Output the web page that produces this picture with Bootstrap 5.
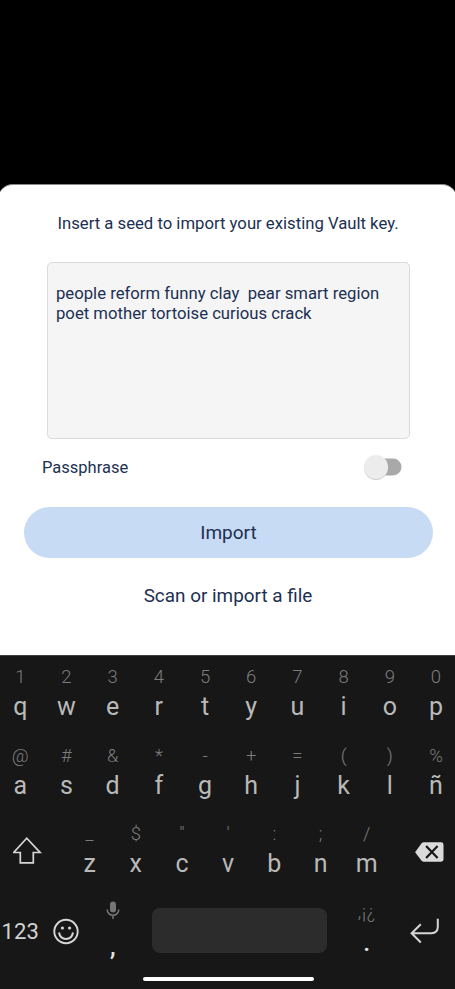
<!DOCTYPE html>
<html lang="en">
<head>
<meta charset="utf-8">
<meta name="viewport" content="width=device-width, initial-scale=1">
<title>Import Vault key</title>
<link href="https://cdn.jsdelivr.net/npm/bootstrap@5.3.0/dist/css/bootstrap.min.css" rel="stylesheet">
<style>
  body { font-family: Roboto, "Noto Sans", sans-serif; background: #000; color: #1c3052; }
  .phone { width: 455px; height: 989px; }
  .backdrop-area { height: 184px; }
  .sheet { height: 471px; margin: 0 -2px; padding: 0 2px; border-radius: 15px 15px 0 0; border-top: 1px solid #8a8a8a; }
  .prompt { font-size: 16.7px; line-height: 24px; margin-top: 27px; padding-left: 1px; }
  .seed { width: 363px; height: 177px; margin: 26px 0 0 47px; padding: 21px 8px; font-size: 16.7px; line-height: 20px;
    color: #1c3052; background: #f5f5f5; border: 1px solid #dadada; border-radius: 5px; resize: none; }
  .pass-row { height: 28px; margin-top: 14px; padding: 0 53.5px 0 42px; font-size: 16.5px; }
  .pass-label { padding-top: 2px; }
  .toggle { width: 38px; height: 26px; }
  .btn-import { width: 409px; height: 51px; margin: 25.5px 0 0 24px; padding: 8px 0 6px; font-size: 19px; color: #1c3052; background: #c8dbf4; border: 0; }
  .btn-scan { margin-top: 23px; padding: 0 0 0 1px; font-size: 18.9px; line-height: 30px; color: #1c3052; border: 0; }
  .keyboard { height: 334px; background: #171717; border-top: 1px solid #3c4040; }
  .keys { width: 462px; height: 78.7px; margin-left: -2.8px; }
  .key { width: 46.2px; padding-top: 8px; color: #b9b9b9; }
  .key-wide { width: 69.3px; }
  .key-space { width: 207.9px; }
  .alt { height: 26px; font-size: 18.5px; line-height: 26px; color: #7c7c7c; font-weight: 300; }
  .main { height: 31px; font-size: 25px; line-height: 33px; }
  .bright { color: #e4e4e4; font-weight: 500; }
  .comma { padding-top: 4px; }
  .marks { font-size: 18px; line-height: 23px; letter-spacing: .8px; }
  .num { font-size: 22px; line-height: 30px; letter-spacing: .2px; color: #d2d2d2; margin-top: 17px; white-space: nowrap; }
  .space-bar { width: 175px; height: 45px; margin-top: 8px; border-radius: 8px; background: #2c2c2c; }
  .home-bar { width: 171px; height: 4px; margin: 6.5px 0 0 142.5px; border-radius: 2px; background: #fff; }
  svg { display: block; flex: none; }
</style>
</head>
<body>
<main class="phone overflow-hidden d-flex flex-column">
  <div class="backdrop-area flex-shrink-0"></div>
  <section class="sheet bg-white flex-shrink-0">
    <p class="prompt text-center mb-0">Insert a seed to import your existing Vault key.</p>
    <textarea class="seed d-block overflow-hidden" spellcheck="false" aria-label="Seed">people reform funny clay  pear smart region poet mother tortoise curious crack</textarea>
    <div class="pass-row d-flex align-items-center justify-content-between">
      <span class="pass-label">Passphrase</span>
      <svg class="toggle" viewBox="0.5 0 38 26" role="switch" aria-checked="false">
        <rect x="8" y="4.5" width="30" height="17" rx="8.5" fill="#a9a9a9"/>
        <circle cx="12.5" cy="14" r="12" fill="#cfcfcf"/>
        <circle cx="12.5" cy="13" r="12" fill="#ececec"/>
      </svg>
    </div>
    <button class="btn btn-import rounded-pill d-block" type="button">Import</button>
    <button class="btn btn-scan w-100 d-block" type="button">Scan or import a file</button>
  </section>

  <section class="keyboard flex-shrink-0 overflow-hidden">
    <div class="keys d-flex text-center">
      <div class="key"><div class="alt">1</div><div class="main">q</div></div>
      <div class="key"><div class="alt">2</div><div class="main">w</div></div>
      <div class="key"><div class="alt">3</div><div class="main">e</div></div>
      <div class="key"><div class="alt">4</div><div class="main">r</div></div>
      <div class="key"><div class="alt">5</div><div class="main">t</div></div>
      <div class="key"><div class="alt">6</div><div class="main">y</div></div>
      <div class="key"><div class="alt">7</div><div class="main">u</div></div>
      <div class="key"><div class="alt">8</div><div class="main">i</div></div>
      <div class="key"><div class="alt">9</div><div class="main">o</div></div>
      <div class="key"><div class="alt">0</div><div class="main">p</div></div>
    </div>
    <div class="keys d-flex text-center">
      <div class="key"><div class="alt">@</div><div class="main">a</div></div>
      <div class="key"><div class="alt">#</div><div class="main">s</div></div>
      <div class="key"><div class="alt">&amp;</div><div class="main">d</div></div>
      <div class="key"><div class="alt">*</div><div class="main">f</div></div>
      <div class="key"><div class="alt">-</div><div class="main">g</div></div>
      <div class="key"><div class="alt">+</div><div class="main">h</div></div>
      <div class="key"><div class="alt">=</div><div class="main">j</div></div>
      <div class="key"><div class="alt">(</div><div class="main">k</div></div>
      <div class="key"><div class="alt">)</div><div class="main">l</div></div>
      <div class="key"><div class="alt">%</div><div class="main">ñ</div></div>
    </div>
    <div class="keys d-flex text-center">
      <div class="key key-wide">
        <svg class="ms-3" width="30" height="50" viewBox="0.3 0 30 50" fill="none" stroke="#d6d6d6" stroke-width="1.7"><path d="M14 17.200 1 31.500h6.600v10.300h13V31.500h6.800z"/></svg>
      </div>
      <div class="key"><div class="alt">_</div><div class="main">z</div></div>
      <div class="key"><div class="alt">$</div><div class="main">x</div></div>
      <div class="key"><div class="alt">"</div><div class="main">c</div></div>
      <div class="key"><div class="alt">'</div><div class="main">v</div></div>
      <div class="key"><div class="alt">:</div><div class="main">b</div></div>
      <div class="key"><div class="alt">;</div><div class="main">n</div></div>
      <div class="key"><div class="alt">/</div><div class="main">m</div></div>
      <div class="key key-wide d-flex justify-content-end">
        <svg class="me-3" width="29" height="50" viewBox="-1.1 0 29 50" overflow="visible"><path d="M0 31.200 6.300 22.500q1-1.200 2.600-1.200H26q2.400 0 2.400 2.400v14.600q0 2.400-2.400 2.400H8.900q-1.600 0-2.600-1.200z" fill="#dadada"/><path d="m11 25.100 11.500 11.800m0-11.800L11 36.900" stroke="#171717" stroke-width="2.200" fill="none"/></svg>
      </div>
    </div>
    <div class="keys d-flex text-center">
      <div class="key"><div class="num">123</div></div>
      <div class="key d-flex justify-content-center">
        <svg width="28" height="50" viewBox="0 0 28 50" fill="none" stroke="#d6d6d6"><circle cx="14" cy="31.500" r="11.700" stroke-width="1.900"/><path d="M7 32.500q1.200 6.500 7 6.500t7-6.500" stroke-width="2"/><circle cx="10.400" cy="28" r="1.600" fill="#d6d6d6" stroke="none"/><circle cx="17.600" cy="28" r="1.600" fill="#d6d6d6" stroke="none"/></svg>
      </div>
      <div class="key">
        <div class="alt d-flex justify-content-center">
          <svg width="14" height="22" viewBox="0 0 14 22"><rect x="4" y="1.500" width="6" height="11" rx="3" fill="#757575"/><path d="M1.200 9.500a5.800 5.800 0 0 0 11.600 0M7 15.300V19" fill="none" stroke="#757575" stroke-width="1.500"/></svg>
        </div>
        <div class="main bright comma">,</div>
      </div>
      <div class="key key-space d-flex justify-content-center"><div class="space-bar"></div></div>
      <div class="key"><div class="alt marks">,¡¿</div><div class="main bright">.</div></div>
      <div class="key key-wide d-flex justify-content-center">
        <svg width="30" height="50" viewBox="-0.6 0 30 50" fill="none" stroke="#d6d6d6" stroke-width="2"><path d="M28.200 18.800v8q0 6.400-6.400 6.400H2M11.200 24.200 2 33.200l9.200 9.300"/></svg>
      </div>
    </div>
    <div class="home-bar"></div>
  </section>
</main>
<script src="https://cdn.jsdelivr.net/npm/bootstrap@5.3.0/dist/js/bootstrap.bundle.min.js"></script>
</body>
</html>
